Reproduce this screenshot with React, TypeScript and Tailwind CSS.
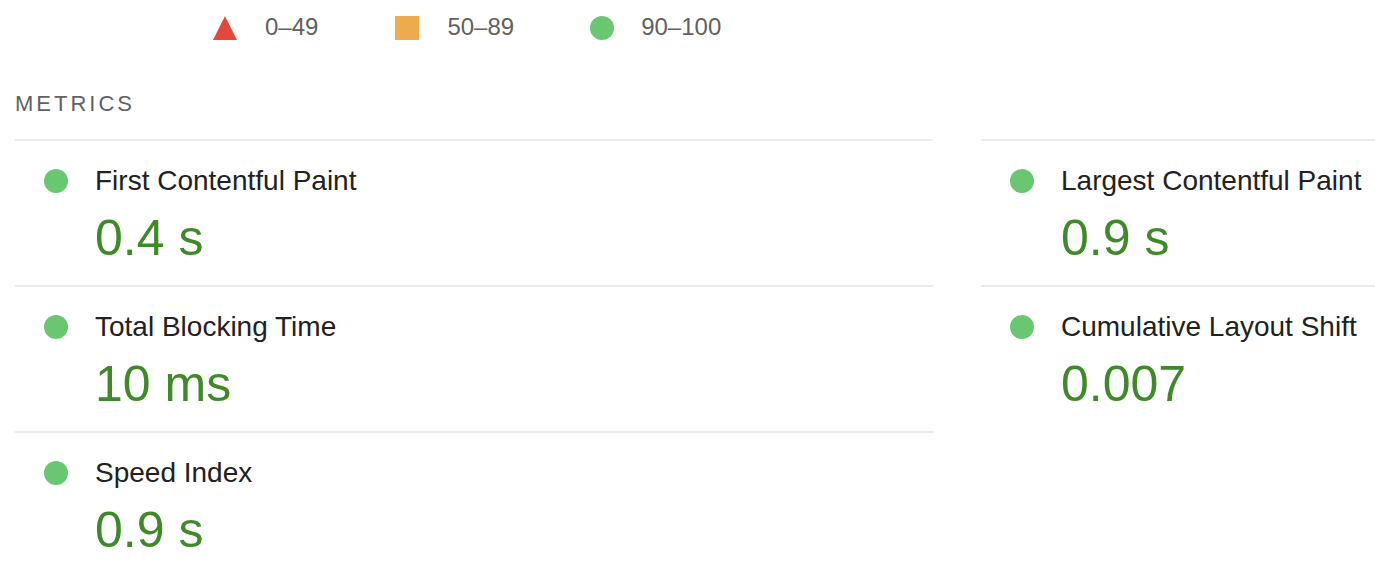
import React from 'react';

type Metric = { title: string; value: string };

const metrics: Metric[] = [
  { title: 'First Contentful Paint', value: '0.4 s' },
  { title: 'Largest Contentful Paint', value: '0.9 s' },
  { title: 'Total Blocking Time', value: '10 ms' },
  { title: 'Cumulative Layout Shift', value: '0.007' },
  { title: 'Speed Index', value: '0.9 s' },
];

function PassDot() {
  return <span className="w-6 h-6 rounded-full bg-[#6ac771] shrink-0" />;
}

function MetricItem({ metric }: { metric: Metric }) {
  return (
    <div className="border-t-2 border-[#ebebeb] pt-[20px] pb-[19px] pl-[29px]">
      <div className="flex items-center gap-[27px] h-10">
        <PassDot />
        <span className="text-[28px] leading-10 text-[#212121]">{metric.title}</span>
      </div>
      <div className="pl-[51px] mt-[9px] text-[50px] leading-[56px] text-[#3f8a28]">{metric.value}</div>
    </div>
  );
}

export default function App() {
  return (
    <div
      className="w-screen h-screen overflow-hidden bg-white"
      style={{ fontFamily: '"Liberation Sans", Arial, sans-serif' }}
    >
      {/* Score legend */}
      <div className="flex items-center pt-4 pl-[213px] text-[24px] leading-6 text-[#616161]">
        <div className="flex items-center gap-[28px]">
          <svg width="24" height="24" viewBox="0 0 24 24">
            <polygon points="12,0 24,24 0,24" fill="#e5473d" />
          </svg>
          <span className="-mt-0.5">0–49</span>
        </div>
        <div className="flex items-center gap-[28px] ml-[77px]">
          <span className="w-6 h-6 bg-[#eeab4e]" />
          <span className="-mt-0.5">50–89</span>
        </div>
        <div className="flex items-center gap-[27px] ml-[76px]">
          <PassDot />
          <span className="-mt-0.5">90–100</span>
        </div>
      </div>

      {/* Metrics */}
      <div className="pl-[15px] mt-[52px]">
        <h2 className="text-[22px] leading-6 tracking-[3px] uppercase text-[#616161]">Metrics</h2>
        <div className="grid grid-cols-[918px_1fr] gap-x-12 mt-[23px]">
          {metrics.map((m) => (
            <MetricItem key={m.title} metric={m} />
          ))}
        </div>
      </div>
    </div>
  );
}
